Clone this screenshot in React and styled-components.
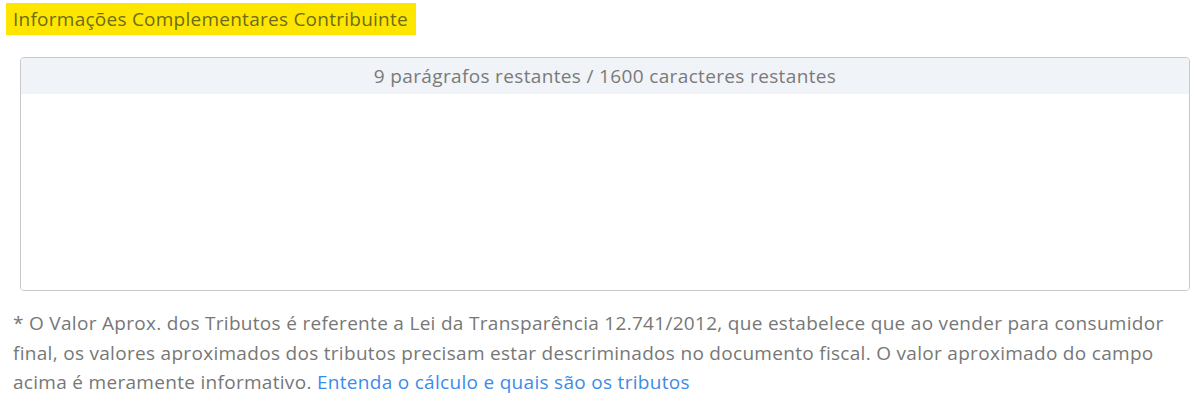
import React from "react";
import styled, { createGlobalStyle } from "styled-components";

const Global = createGlobalStyle`
  html, body { margin: 0; padding: 0; background: #fff; }
  body { font-family: "Open Sans", Lato, sans-serif; }
`;

const Page = styled.div`
  width: 1204px;
  padding: 3px 0 0 0;
  box-sizing: border-box;
`;

const TitleRow = styled.div`
  padding-left: 6px;
`;

const Title = styled.span`
  display: inline-block;
  background: #ffe600;
  color: #6b6d18;
  font-size: 19px;
  letter-spacing: 0.25px;
  line-height: 32px;
  padding: 0 8px 0 7px;
`;

const Editor = styled.div`
  box-sizing: border-box;
  margin: 22px 14px 0 20px;
  height: 234px;
  border: 1px solid #c8c8c8;
  border-radius: 4px;
  overflow: hidden;
  display: flex;
  flex-direction: column;
`;

const Counter = styled.div`
  background: #f0f3f8;
  height: 36px;
  line-height: 36px;
  text-align: center;
  color: #7a7a7a;
  font-size: 19px;
  letter-spacing: 0.35px;
`;

const Area = styled.textarea`
  flex: 1;
  border: none;
  outline: none;
  resize: none;
  font-family: inherit;
  font-size: 16px;
  background: #fff;
`;

const Note = styled.p`
  margin: 18px 14px 0 13px;
  color: #777;
  font-size: 19px;
  letter-spacing: 0.3px;
  line-height: 29.5px;
`;

const Link = styled.a`
  color: #3d8be8;
  text-decoration: none;
`;

export default function App() {
  return (
    <Page>
      <Global />
      <TitleRow>
        <Title>Informações Complementares Contribuinte</Title>
      </TitleRow>
      <Editor>
        <Counter>9 parágrafos restantes / 1600 caracteres restantes</Counter>
        <Area />
      </Editor>
      <Note>
        * O Valor Aprox. dos Tributos é referente a Lei da Transparência 12.741/2012, que estabelece que ao vender para consumidor
        final, os valores aproximados dos tributos precisam estar descriminados no documento fiscal. O valor aproximado do campo
        acima é meramente informativo. <Link href="#">Entenda o cálculo e quais são os tributos</Link>
      </Note>
    </Page>
  );
}
